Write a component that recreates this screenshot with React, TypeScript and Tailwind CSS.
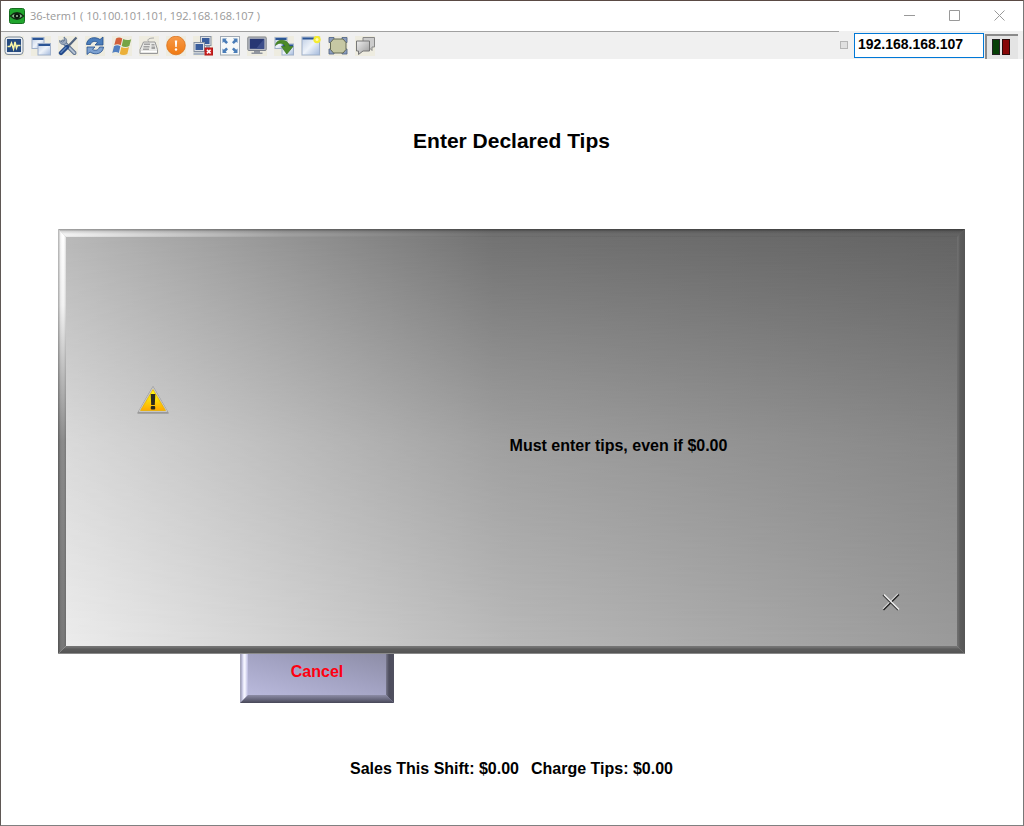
import React from "react";

type ToolIcon = { label: string; art: React.ReactNode };

const windowShape = (x: number, y: number, w: number, h: number) => (
  <g key={`${x}-${y}`}>
    <rect x={x} y={y} width={w} height={h} fill="url(#pane)" stroke="#9fb0cb" strokeWidth="1" />
    <rect x={x + 0.5} y={y + 0.5} width={w - 1} height="2" fill="#2b5596" />
  </g>
);

const tools: ToolIcon[] = [
  {
    label: "Monitor",
    art: (
      <>
        <rect x="1" y="1" width="18" height="17.500" rx="3" fill="#e9edf2" stroke="#7b8899" />
        <rect x="3" y="3" width="14" height="13" fill="#254a80" />
        <path d="M3.500 10.500h2.500l1.500-3.500 2 6 1.500-7 1.500 6 1-2.500h3" fill="none" stroke="#fbf7a5" strokeWidth="1.500" />
      </>
    ),
  },
  { label: "Windows", art: <>{windowShape(1, 1.5, 12, 11)}{windowShape(7, 7.500, 12.5, 11.5)}</> },
  {
    label: "Settings",
    art: (
      <>
        <path d="M5 5.500 16.500 17" stroke="#5f738f" strokeWidth="4" strokeLinecap="round" />
        <path d="M5 5.500 16.500 17" stroke="#b4c1d2" strokeWidth="2" strokeLinecap="round" />
        <path d="M1.500 4.500c0 3.500 3.500 5 6 3.500 2-2 1.500-5.500-1.500-7l.5 3.500L4.500 6z" fill="#9aa9be" stroke="#5f738f" strokeWidth=".8" />
        <path d="M18.500 1.500 9.500 11" stroke="#53657f" strokeWidth="2.200" />
        <path d="M9 11 3 17" stroke="#23498a" strokeWidth="4.400" strokeLinecap="round" />
        <path d="M8 11.500 3 16.500" stroke="#5f86bd" strokeWidth="1.300" strokeLinecap="round" />
      </>
    ),
  },
  {
    label: "Refresh",
    art: (
      <>
        <path d="M1.500 8.500C2 1.500 10 0 15 3.500L18 1v8h-8l2.500-2.500C10 4.500 6.500 5.500 5.500 8.500z" fill="#4b7dbb" stroke="#234e8c" strokeWidth=".8" />
        <path d="M18.500 11C18 18 10 19.500 5 16l-3 2.500V11h8l-2.500 2.300C10 15 13.500 14.500 14.500 11z" fill="#7da1d0" stroke="#234e8c" strokeWidth=".8" />
      </>
    ),
  },
  {
    label: "Start menu",
    art: (
      <>
        <path d="M4 2.500c2-1.500 4.300-1.300 6.300 0L8.700 9.300C7 8 4.500 8 2.300 9z" fill="#d2603b" />
        <path d="M11.200 3c2.500 1.400 5.200 1.400 8 .2L17.300 10c-2.300 1.200-5.200 1.200-7.600 0z" fill="#76a444" />
        <path d="M2 10.200c2-1.200 4.500-1.200 6.400 0L6.800 17C5 15.700 2.300 15.800.3 17z" fill="#517fc0" />
        <path d="M9.400 11c2.400 1.200 5.200 1.200 7.600 0l-1.700 7c-2.400 1.300-5.200 1.200-7.600 0z" fill="#ebb03a" />
      </>
    ),
  },
  {
    label: "Keyboard",
    art: (
      <>
        <path d="M10 6c-3-3 1-4 5-4" fill="none" stroke="#aaa" />
        <path d="M4.500 6h11.500l2.500 7.500v4H1v-4z" fill="#e8e8e5" stroke="#999" />
        <path d="M5 7.500h6v1.500H5zM4.500 10h6v1.500h-6zM4 12.500h6V14H4zM12.500 8h3v1.500h-3zM12.500 10.500h3.500V13h-3.500z" fill="#a2a2a2" />
        <path d="M2 15.500h16" stroke="#fff" strokeWidth="1" />
      </>
    ),
  },
  {
    label: "Alert",
    art: (
      <>
        <circle cx="10" cy="9.500" r="9.300" fill="url(#orange)" stroke="#d9711c" strokeWidth=".8" />
        <path d="M8.800 4.500h2.400l-.5 6.500H9.300z" fill="#fff" />
        <circle cx="10" cy="13.500" r="1.200" fill="#fff" />
      </>
    ),
  },
  {
    label: "Disconnect",
    art: (
      <>
        <rect x="7.500" y=".5" width="10.500" height="9" fill="#dfe2e6" stroke="#8792a2" />
        <rect x="9" y="2" width="7.500" height="6" fill="#395d9c" />
        <path d="M13 10h4v3h-4z" fill="#a2abb8" />
        <rect x="1" y="6.500" width="10.500" height="9" fill="#dfe2e6" stroke="#8792a2" />
        <rect x="2.500" y="8" width="7.500" height="6" fill="#395d9c" />
        <path d="M.5 16.500h11v2.500H.5z" fill="#a9b4c4" />
        <rect x="12" y="12" width="7.500" height="7" fill="#cc2020" stroke="#b51a1a" />
        <path d="m13.900 13.700 3.700 3.700m0-3.700-3.700 3.700" stroke="#fff" strokeWidth="1.500" />
      </>
    ),
  },
  {
    label: "Full screen",
    art: (
      <>
        <rect x=".5" y=".5" width="19" height="18.500" fill="#f7f9f8" stroke="#a0a9b3" />
        <path d="M2.500 2.500h4.500L5.700 3.800 8 6.200 6.200 8 3.800 5.700 2.500 7zM17.500 2.500V7l-1.300-1.300L13.800 8 12 6.200l2.300-2.400L13 2.500zM2.500 17v-4.500l1.300 1.300 2.400-2.300L8 13.300l-2.300 2.400L7 17zM17.500 17H13l1.300-1.300-2.300-2.400 1.800-1.800 2.400 2.300 1.300-1.300z" fill="#4a7db8" />
      </>
    ),
  },
  {
    label: "Display",
    art: (
      <>
        <rect x=".8" y="1" width="18.400" height="13.500" rx="1" fill="#b8bbc2" stroke="#7e838d" />
        <rect x="2.800" y="2.800" width="14.400" height="10" fill="#273774" />
        <path d="M17.200 2.800v10H9z" fill="#3d4e8a" />
        <path d="M7 15h6v1.500h2.500V18h-11v-1.500H7z" fill="#90959e" />
      </>
    ),
  },
  {
    label: "Transfer",
    art: (
      <>
        {windowShape(1, 1.500, 12, 11)}{windowShape(8, 8, 11.500, 11)}
        <path d="M1.500 9.500C2 2.500 14 2 15.500 10.500H19L12.800 18 7.500 10.500H11C10 6.500 5 6 1.500 9.500z" fill="#4b8a29" stroke="#35701b" strokeWidth=".7" />
      </>
    ),
  },
  {
    label: "New window",
    art: (
      <>
        {windowShape(1, 1, 17.500, 18)}
        <circle cx="16" cy="3.500" r="3.700" fill="#f5ec32" />
        <circle cx="16" cy="3.500" r="1.500" fill="#fffbb0" />
      </>
    ),
  },
  {
    label: "Resize",
    art: (
      <>
        <path d="M1 1.500h5v5H1zM14 1.500h5v5h-5zM1 13h5v5H1zM14 13h5v5h-5z" fill="#8a9cbd" stroke="#4d6084" strokeWidth=".8" />
        <path d="M5.500 3h9.500L18 6.500v7L15 17H5.500l-3-3.500v-7z" fill="#c6c8a3" stroke="#646a55" />
      </>
    ),
  },
  {
    label: "Chat",
    art: (
      <>
        <path d="M8 1.500h11.500V11H17v3.500L13.500 11H8z" fill="#ccc" stroke="#888" />
        <path d="M1.500 5h13v10H8l-4.500 3.500V15h-2z" fill="url(#bubble)" stroke="#777" />
      </>
    ),
  },
];

function Gradients() {
  return (
    <svg width="0" height="0" className="absolute" aria-hidden="true">
      <defs>
        <linearGradient id="pane" x2="1" y2="1">
          <stop stopColor="#bdcce3" />
          <stop offset=".5" stopColor="#eef3fa" />
          <stop offset="1" stopColor="#a3b9dc" />
        </linearGradient>
        <linearGradient id="orange" x2="0" y2="1">
          <stop stopColor="#f79a4a" />
          <stop offset="1" stopColor="#f07a12" />
        </linearGradient>
        <linearGradient id="bubble" x2="1" y2="1">
          <stop stopColor="#eee" />
          <stop offset="1" stopColor="#999" />
        </linearGradient>
        <linearGradient id="warn" x2="0" y2="1">
          <stop stopColor="#ffff18" />
          <stop offset=".5" stopColor="#fadb08" />
          <stop offset="1" stopColor="#ffa800" />
        </linearGradient>
      </defs>
    </svg>
  );
}

function TitleBar() {
  const caption = "flex h-[28px] w-[45px] items-center justify-center";
  return (
    <header className="flex h-[30px] items-center bg-white pr-[1px] pl-2">
      <svg width="16" height="16" viewBox="0 0 16 16" aria-hidden="true">
        <rect x=".5" y=".5" width="15" height="15" rx="2" fill="#20a52d" stroke="#176d20" />
        <path d="M1.500 8Q8 1.500 14.500 8 8 14.500 1.500 8z" fill="#8bbd90" stroke="#102a13" strokeWidth="1.200" />
        <circle cx="8" cy="8" r="3" fill="#0b180d" />
        <circle cx="8" cy="8" r="1" fill="#9ac79e" />
      </svg>
      <h1 className="ml-[5px] flex-1 font-['Open_Sans','Noto_Sans',sans-serif] text-[11px] leading-4 text-[#999]">
        36-term1 ( 10.100.101.101, 192.168.168.107 )
      </h1>
      <div className="flex h-full items-start">
        <button aria-label="Minimize" className={caption}>
          <svg width="11" height="11" stroke="#999" fill="none"><path d="M0 5.500h11" /></svg>
        </button>
        <button aria-label="Maximize" className={caption}>
          <svg width="11" height="11" stroke="#999" fill="none"><path d="M.5.5h10v10H.5z" /></svg>
        </button>
        <button aria-label="Close window" className={caption}>
          <svg width="11" height="11" stroke="#999" fill="none"><path d="m.5.5 10 10m0-10-10 10" /></svg>
        </button>
      </div>
    </header>
  );
}

function Toolbar() {
  return (
    <div className="flex h-7 bg-[#f0f0f0]">
      <div className="flex flex-1 items-center gap-[7px] border-t border-[#a0a0a0] pl-[3px]">
        {tools.map((tool) => (
          <button key={tool.label} aria-label={tool.label} className="h-5 w-5 bg-[#ece9d8]/70">
            <svg width="20" height="20" viewBox="0 0 20 20">{tool.art}</svg>
          </button>
        ))}
      </div>
      <label className="flex items-center gap-[6px] pl-[1px]">
        <span className="h-2 w-2 border border-[#b5b5b5] bg-[#e0e0e0]" />
        <input
          aria-label="Host address"
          defaultValue="192.168.168.107"
          className="h-[25px] w-[130px] border border-[#0078d7] bg-white px-[3px] pb-[3px] font-['Liberation_Sans',Arial,sans-serif] text-[14px] font-bold text-black outline-none"
        />
      </label>
      <div className="mt-[3px] mr-[5px] ml-[1px] flex w-[33px] items-start justify-center gap-[2px] border-t-2 border-l-2 border-[#8a8a8a] bg-[#e4e4e4] pt-[3px] pr-1">
        <span className="h-4 w-2 border border-[#222] bg-[#064006]" />
        <span className="h-4 w-2 border border-[#2a0a0a] bg-[#870606]" />
      </div>
    </div>
  );
}

/* Mitred raised edges of the message panel, 8px thick on every side. */
function PanelEdges() {
  return (
    <div aria-hidden="true" className="pointer-events-none absolute inset-0">
      <div className="absolute inset-x-0 top-0 h-2 bg-[linear-gradient(to_bottom,#0005_0_1px,#0002_2px,transparent_5px_7px,#0001_8px),linear-gradient(to_right,#f4f4f4,#d2d2d2_10%,#a0a0a0_25%,#707070_48%,#626262)] [clip-path:polygon(0_0,100%_0,calc(100%-8px)_100%,8px_100%)]" />
      <div className="absolute inset-y-0 left-0 w-2 bg-[linear-gradient(to_right,#0004_0_1px,#0001_2px,transparent_4px_6px,#0002_8px),linear-gradient(to_bottom,#fff,#f2f2f2_18%,#b8b8b8_35%,#8a8a8a_50%,#777)] [clip-path:polygon(0_0,100%_8px,100%_calc(100%-8px),0_100%)]" />
      <div className="absolute inset-y-0 right-0 w-2 bg-[linear-gradient(to_right,#6e6e6e_0_1px,#5c5c5c_3px,#565656)] [clip-path:polygon(100%_0,0_8px,0_calc(100%-8px),100%_100%)]" />
      <div className="absolute inset-x-0 bottom-0 h-2 bg-[linear-gradient(to_bottom,#747474_0_1px,#5c5c5c_3px,#545454_7px,#8a8a8a_7px)] [clip-path:polygon(8px_0,calc(100%-8px)_0,100%_100%,0_100%)]" />
    </div>
  );
}

function MessagePanel() {
  return (
    <section
      role="alertdialog"
      aria-labelledby="message"
      className="relative z-10 grid min-h-[425px] grid-cols-[174px_1fr_132px] grid-rows-[1fr_88px] bg-[linear-gradient(to_right,#eeeeee,#bababa_50%,#9b9b9b)] p-2"
    >
      <div
        aria-hidden="true"
        className="absolute inset-0 bg-[linear-gradient(to_right,#b8b8b8,#707070_48%,#626262)] [mask-image:linear-gradient(to_bottom,black,rgb(0_0_0/0.36)_50%,transparent)]"
      />
      <PanelEdges />
      <div className="relative col-start-1 row-start-1 flex items-center justify-center pt-1">
        <svg width="32" height="28" viewBox="0 0 32 28" role="img" aria-label="Warning">
          <path d="M16 1 31 27H1z" fill="#999" stroke="#999" strokeWidth="1.500" strokeLinejoin="round" />
          <path d="M16 1.500 30 25.500H2z" fill="#ddd" stroke="#c5c5c5" strokeLinejoin="round" />
          <path d="M16 3.500 28.500 24.500h-25z" fill="url(#warn)" stroke="#e5ad00" strokeWidth=".8" />
          <path d="M13.700 8h4.600l-.5 11h-3.600z" fill="#2a2a20" />
          <rect x="13.800" y="20" width="4.400" height="3.500" rx="1" fill="#242820" />
        </svg>
      </div>
      <p
        id="message"
        className="relative col-span-2 col-start-2 row-span-2 row-start-1 flex items-center justify-center pt-2 pl-10 text-[16px] leading-5 font-bold"
      >
        Must enter tips, even if $0.00
      </p>
      <button aria-label="Dismiss" className="relative col-start-3 row-start-2 flex items-center justify-center">
        <svg width="18" height="18" viewBox="0 0 18 18" fill="none">
          <path d="M1 16 16 1" stroke="#e0e0e0" strokeWidth="1.300" />
          <path d="M1.500 17 17 1.500" stroke="#222" strokeWidth="1.500" />
          <path d="M1 2 16 17" stroke="#333" strokeWidth="1.400" />
          <path d="M2 1.500 17 16.500" stroke="#eee" strokeWidth="1.500" />
        </svg>
      </button>
    </section>
  );
}

export default function App() {
  return (
    <div className="flex min-h-screen flex-col border border-t-[#5a4a44] border-r-[#777] border-b-[#808080] border-l-[#5f5855] bg-white font-['Liberation_Sans',Arial,sans-serif] text-black">
      <Gradients />
      <TitleBar />
      <Toolbar />
      <main className="flex flex-1 flex-col pr-[58px] pl-[57px]">
        <h2 className="mt-[70px] text-center text-[21px] leading-6 font-bold">Enter Declared Tips</h2>
        <div className="mt-[76px]">
          <MessagePanel />
          <button className="relative -mt-[13px] ml-[182px] block h-[62px] w-[154px] bg-[linear-gradient(15deg,#bfbfe2,#a2a2c2_50%,#85859c)] text-[16px] leading-5 font-bold text-[#ff0010]">
            <span aria-hidden="true" className="absolute inset-y-0 left-0 w-2 bg-[linear-gradient(to_right,#a5a5bb_0_1px,#c0c0df_2px,#f4f4ff_4px_5px,#b9b9df)] [clip-path:polygon(0_0,100%_8px,100%_calc(100%-8px),0_100%)]" />
            <span aria-hidden="true" className="absolute inset-y-0 right-0 w-2 bg-[linear-gradient(to_right,#77778b,#4d4d5d_3px,#50505f)] [clip-path:polygon(100%_0,0_8px,0_calc(100%-8px),100%_100%)]" />
            <span aria-hidden="true" className="absolute inset-x-0 bottom-0 h-2 bg-[linear-gradient(to_bottom,#8c8ca6,#6a6a80_4px,#474757)] [clip-path:polygon(8px_0,calc(100%-8px)_0,100%_100%,0_100%)]" />
            Cancel
          </button>
        </div>
        <p className="mt-[56px] flex justify-center gap-3 text-[16px] leading-5 font-bold">
          <span>Sales This Shift: $0.00</span>
          <span>Charge Tips: $0.00</span>
        </p>
      </main>
    </div>
  );
}
